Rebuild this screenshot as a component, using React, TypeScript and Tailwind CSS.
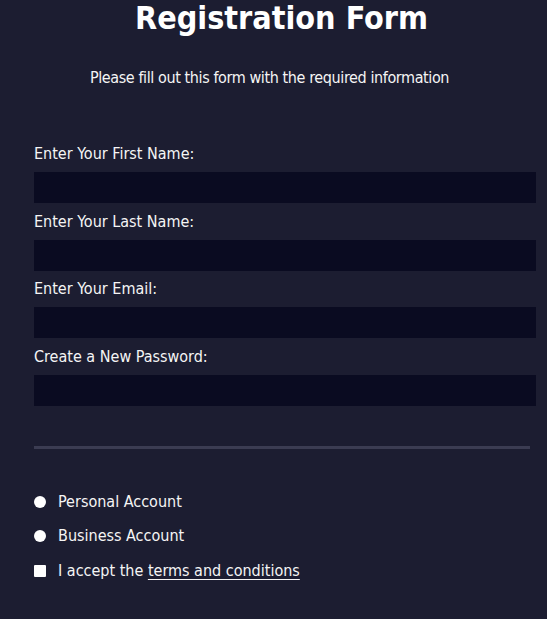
import React from "react";

const fields = [
  "Enter Your First Name:",
  "Enter Your Last Name:",
  "Enter Your Email:",
  "Create a New Password:",
];

export default function App() {
  return (
    <div
      className="min-h-[619px] w-full bg-[#1c1d31] text-[#f5f5f5]"
      style={{ fontFamily: '"DejaVu Sans Condensed", Tahoma, "DejaVu Sans", sans-serif' }}
    >
      <h1 className="pl-[16px] text-center text-[32px] font-bold leading-[36px] text-white">
        Registration Form
      </h1>
      <p className="mt-[32px] pr-[8px] text-center text-[16px] leading-[20px] tracking-[-0.4px]">
        Please fill out this form with the required information
      </p>
      <form className="mt-[56px] pl-[34px] pr-[11px]">
        <div className="flex flex-col">
          {fields.map((f) => (
            <div key={f} className="flex flex-col">
              <label className="h-[20px] text-[16px] leading-[20px]">{f}</label>
              <input
                type={f.includes("Password") ? "password" : "text"}
                className="mt-[8px] h-[31px] w-full border-0 bg-[#0a0b21] outline-none"
              />
              <div className="h-[8.67px]" />
            </div>
          ))}
        </div>
        <div className="mt-[31px] mr-[6px] h-[3px] bg-[#3b3c52]" />
        <div className="mt-[43px] flex flex-col gap-[14px] text-[16px] leading-[20px]">
          <label className="flex items-center gap-[12px]">
            <span className="block h-[12px] w-[12px] rounded-full bg-white" />
            <span>Personal Account</span>
          </label>
          <label className="flex items-center gap-[12px]">
            <span className="block h-[12px] w-[12px] rounded-full bg-white" />
            <span>Business Account</span>
          </label>
          <label className="flex items-center gap-[12px] pt-[1px]">
            <span className="block h-[12px] w-[12px] rounded-[1px] bg-white" />
            <span>
              I accept the <span className="underline underline-offset-[3px]">terms and conditions</span>
            </span>
          </label>
        </div>
      </form>
    </div>
  );
}
